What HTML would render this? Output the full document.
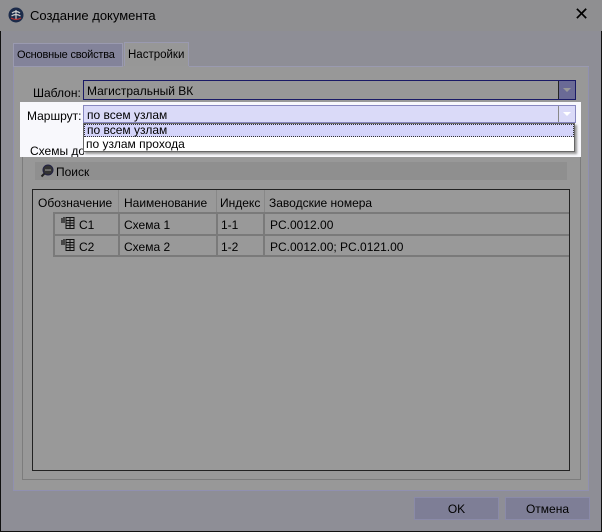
<!DOCTYPE html>
<html><head><meta charset="utf-8"><style>
*{box-sizing:border-box;margin:0;padding:0}
body{width:602px;height:532px;overflow:hidden;font-family:"Liberation Sans",sans-serif;font-size:12px;color:#000;position:relative;background:#8e8e96}
.a{position:absolute;white-space:nowrap}
</style></head><body>
<div class="a" style="left:0;top:0;width:602px;height:532px;border:1px solid #111;border-top:none"></div>
<div class="a" style="left:0;top:0;width:602px;height:31px;background:#8f8f91"></div>
<svg class="a" style="left:8px;top:7px" width="16" height="16" viewBox="0 0 16 16"><circle cx="8" cy="8" r="7.5" fill="#1c2b4a"/><path d="M8 3 L8 12 M4 6 Q8 3 12 6 M3.5 9 Q8 6 12.5 9" stroke="#ccc" stroke-width="1.2" fill="none"/><path d="M3 11 Q8 14 13 11" stroke="#b33" stroke-width="1.2" fill="none"/></svg>
<div class="a" style="left:30px;top:8px;font-size:13px">Создание документа</div>
<div class="a" style="left:574px;top:4px;font-size:18px">✕</div>
<div class="a" style="left:13px;top:43px;width:110px;height:23px;background:#83839a;border:1px solid #9a9ab0;border-bottom:none;padding:5px 0 0 3px;font-size:11px;letter-spacing:-0.2px">Основные свойства</div>
<div class="a" style="left:124px;top:42px;width:65px;height:26px;background:#979797;border:1px solid #9a9ab0;border-bottom:none;padding:6px 0 0 3px;font-size:11.5px">Настройки</div>
<div class="a" style="left:13px;top:66px;width:576px;height:425px;background:#989898;border:1px solid #9090b0;border-top:none"></div>
<div class="a" style="left:13px;top:66px;width:110px;height:1px;background:#9a9ab0"></div>
<div class="a" style="left:189px;top:66px;width:400px;height:1px;background:#9a9ab0"></div>
<div class="a" style="left:33px;top:86px">Шаблон:</div>
<div class="a" style="left:83px;top:80px;width:493px;height:20px;border:1px solid #1a1a66;background:#989898;padding:3px 0 0 3px">Магистральный ВК</div>
<div class="a" style="left:558px;top:81px;width:17px;height:18px;background:#6a6a96;border-left:1px solid #222"><div style="margin:7px auto 0;width:0;height:0;border-left:4px solid transparent;border-right:4px solid transparent;border-top:4px solid #999"></div></div>
<div class="a" style="left:22px;top:146px;width:559px;height:334px;border:1px solid #7c7c7c"></div>
<div class="a" style="left:35px;top:162px;width:532px;height:18px;background:#8f8f8f"></div>
<svg class="a" style="left:40px;top:164px" width="14" height="14" viewBox="0 0 14 14"><circle cx="8" cy="6" r="5" fill="#333" stroke="#224" stroke-width="1"/><circle cx="6" cy="6" r=".8" fill="#aaa"/><circle cx="8" cy="6" r=".8" fill="#aaa"/><circle cx="10" cy="6" r=".8" fill="#aaa"/><path d="M4.5 9.5 L1.5 12.5" stroke="#222" stroke-width="2"/></svg>
<div class="a" style="left:56px;top:165px">Поиск</div>
<div class="a" style="left:32px;top:189px;width:538px;height:282px;border:1px solid #222;background:#999"></div>
<div class="a" style="left:38px;top:196px">Обозначение</div>
<div class="a" style="left:118px;top:190px;width:1px;height:22px;background:#888"></div>
<div class="a" style="left:124px;top:196px">Наименование</div>
<div class="a" style="left:216px;top:190px;width:1px;height:22px;background:#888"></div>
<div class="a" style="left:220px;top:196px">Индекс</div>
<div class="a" style="left:264px;top:190px;width:1px;height:22px;background:#888"></div>
<div class="a" style="left:269px;top:196px">Заводские номера</div>
<div class="a" style="left:53px;top:212px;width:516px;height:45px;border:2px solid #7a7a7a;border-right:none"></div>
<div class="a" style="left:53px;top:234px;width:516px;height:2px;background:#7a7a7a"></div>
<div class="a" style="left:118px;top:212px;width:2px;height:45px;background:#7a7a7a"></div>
<div class="a" style="left:216px;top:212px;width:2px;height:45px;background:#7a7a7a"></div>
<div class="a" style="left:263px;top:212px;width:2px;height:45px;background:#7a7a7a"></div>
<svg class="a" style="left:61px;top:216px" width="14" height="14" viewBox="0 0 14 14"><path d="M1 2v5M3 1v6" stroke="#111" stroke-width="1.2"/><rect x="5" y="1.5" width="8" height="11" fill="none" stroke="#111"/><path d="M5 4.5h8M5 7h8M5 9.5h8M9 1.5v11" stroke="#111"/></svg>
<svg class="a" style="left:61px;top:238px" width="14" height="14" viewBox="0 0 14 14"><path d="M1 2v5M3 1v6" stroke="#111" stroke-width="1.2"/><rect x="5" y="1.5" width="8" height="11" fill="none" stroke="#111"/><path d="M5 4.5h8M5 7h8M5 9.5h8M9 1.5v11" stroke="#111"/></svg>
<div class="a" style="left:79px;top:218px">C1</div><div class="a" style="left:124px;top:218px">Схема 1</div><div class="a" style="left:221px;top:218px">1-1</div><div class="a" style="left:270px;top:218px">PC.0012.00</div>
<div class="a" style="left:79px;top:240px">C2</div><div class="a" style="left:124px;top:240px">Схема 2</div><div class="a" style="left:221px;top:240px">1-2</div><div class="a" style="left:270px;top:240px">PC.0012.00; PC.0121.00</div>
<div class="a" style="left:20px;top:102px;width:561px;height:55px;background:#f8f8fc"></div>
<div class="a" style="left:30px;top:145px;width:54px;height:12px;overflow:hidden;font-size:12px;line-height:12px">Схемы док</div>
<div class="a" style="left:27px;top:109px">Маршрут:</div>
<div class="a" style="left:83px;top:105px;width:493px;height:18px;border:1px solid #8888c0;background:#dadaf8;padding:2px 0 0 3px">по всем узлам</div>
<div class="a" style="left:558px;top:106px;width:17px;height:16px;border-left:1px solid #888"><div style="margin:6px auto 0;width:0;height:0;border-left:4px solid transparent;border-right:4px solid transparent;border-top:4px solid #fff"></div></div>
<div class="a" style="left:83px;top:123px;width:492px;height:29px;background:#fff;border:1px solid #666;box-shadow:2px 2px 2px #999"></div>
<div class="a" style="left:84px;top:124px;width:490px;height:13px;background:#d4d4fa;border:1px dotted #333;line-height:11px;padding-left:2px">по всем узлам</div>
<div class="a" style="left:86px;top:138px;line-height:13px">по узлам прохода</div>
<div class="a" style="left:414px;top:497px;width:85px;height:23px;background:#7e7e96;border:1px solid #8a8aa8;text-align:center;padding-top:4px">OK</div>
<div class="a" style="left:505px;top:497px;width:85px;height:23px;background:#7e7e96;border:1px solid #8a8aa8;text-align:center;padding-top:4px">Отмена</div>
</body></html>
